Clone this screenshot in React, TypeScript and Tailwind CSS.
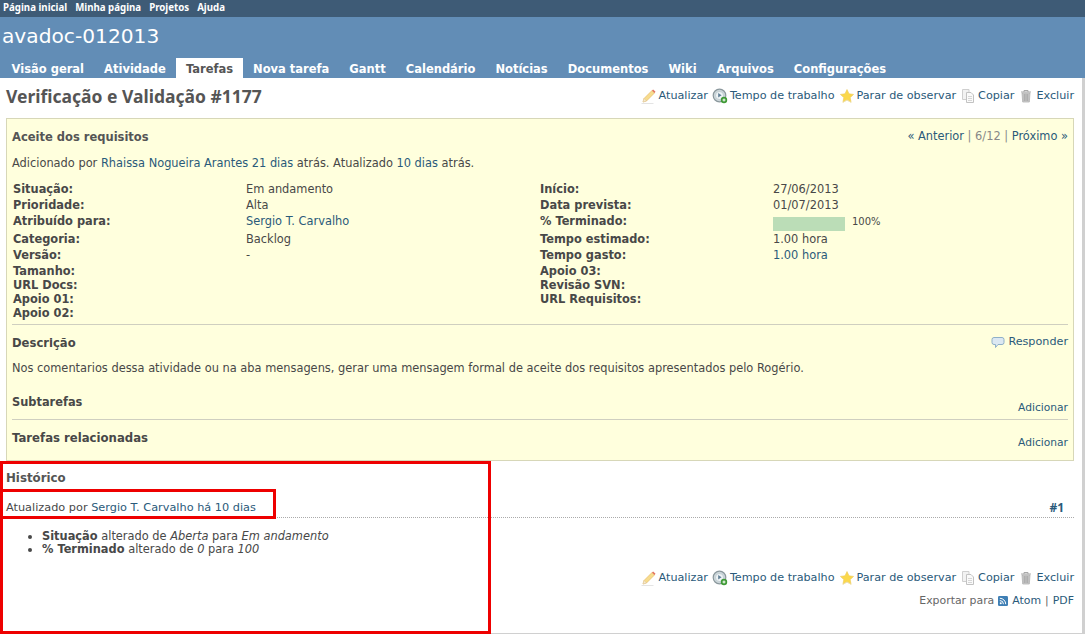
const font = { fontFamily: '"DejaVu Sans", Verdana, sans-serif' };
const narrow = { fontFamily: '"Noto Sans", "DejaVu Sans", sans-serif' };

function Pencil() {
  return (
    <svg width="16" height="16" viewBox="0 0 16 16" className="shrink-0">
      <path d="M2 14l1-3.500 8-8 2.500 2.500-8 8z" fill="#f7dc8e" stroke="#e3b45c" strokeWidth="0.6" />
      <path d="M11 2.500l2.500 2.500 1-1.200-2.400-2.400z" fill="#e2705c" />
      <path d="M2 14l1-3.500 2.500 2.500z" fill="#f6ead0" stroke="#d8c39a" strokeWidth="0.4" />
      <path d="M0.500 15.500h12" stroke="#e4e4e4" strokeWidth="1" />
    </svg>
  );
}

function Clock() {
  return (
    <svg width="16" height="16" viewBox="0 0 16 16" className="shrink-0">
      <circle cx="7.500" cy="7.500" r="6.300" fill="#ccd6da" stroke="#8a979c" strokeWidth="1.200" />
      <circle cx="7.500" cy="7.500" r="4" fill="#eef3f5" stroke="#a9b8be" strokeWidth="0.500" />
      <path d="M6.200 5v4.500l3.400-2.200z" fill="#607f96" />
      <circle cx="12" cy="12" r="3.200" fill="#3f9a36" />
      <path d="M10.500 12h3M12 10.500v3" stroke="#fff" strokeWidth="1" />
    </svg>
  );
}

function Star() {
  return (
    <svg width="16" height="16" viewBox="0 0 16 16" className="shrink-0">
      <path d="M8 1.500l2 4.300 4.600.6-3.400 3.200.9 4.700L8 12l-4.100 2.300.9-4.700L1.400 6.400l4.600-.6z" fill="#fbd84b" stroke="#ecc95a" strokeWidth="0.600" />
      <path d="M3.900 14.300L8 12l4.100 2.300" stroke="#e8e2c8" strokeWidth="0.700" fill="none" />
    </svg>
  );
}

function CopyIcon() {
  return (
    <svg width="16" height="16" viewBox="0 0 16 16" className="shrink-0">
      <path d="M2.500 1.500h6.500v10h-6.500z" fill="#f2f2f2" stroke="#cfcfcf" />
      <path d="M6.500 4.500h4.500l2.500 2.500v7.500h-7z" fill="#fafafa" stroke="#c2c2c2" />
      <path d="M8 8.500h4M8 10.500h4M8 12.500h4" stroke="#d6d6d6" />
    </svg>
  );
}

function Trash() {
  return (
    <svg width="16" height="16" viewBox="0 0 16 16" className="shrink-0">
      <path d="M3 4h10M6 4V2.500h4V4" stroke="#a8a8a8" fill="none" />
      <path d="M4 5h8l-.7 9H4.700z" fill="#cfcfcf" stroke="#a8a8a8" strokeWidth="0.700" />
      <path d="M6.200 6v7M8 6v7M9.800 6v7" stroke="#949494" strokeWidth="0.800" />
    </svg>
  );
}

function Comment() {
  return (
    <svg width="14" height="14" viewBox="0 0 14 14" className="shrink-0">
      <path d="M3 1.500h8a2 2 0 0 1 2 2v3a2 2 0 0 1-2 2H7l-2.500 3v-3H3a2 2 0 0 1-2-2v-3a2 2 0 0 1 2-2z" fill="#dce8f2" stroke="#8fb0c8" />
    </svg>
  );
}

function Feed() {
  return (
    <svg width="10" height="10" viewBox="0 0 11 11" className="shrink-0">
      <rect width="11" height="11" rx="1.500" fill="#3f7fb5" />
      <circle cx="3" cy="8" r="1.100" fill="#fff" />
      <path d="M2 5a4 4 0 0 1 4 4M2 2.500A6.500 6.500 0 0 1 8.500 9" stroke="#fff" strokeWidth="1.100" fill="none" />
    </svg>
  );
}

function ActionBar() {
  const items = [
    { icon: <Pencil />, label: "Atualizar" },
    { icon: <Clock />, label: "Tempo de trabalho" },
    { icon: <Star />, label: "Parar de observar" },
    { icon: <CopyIcon />, label: "Copiar" },
    { icon: <Trash />, label: "Excluir" },
  ];
  return (
    <div className="flex items-center gap-[4px] text-[11.200px] text-[#2a5a7a]">
      {items.map((i) => (
        <span key={i.label} className="flex items-center gap-[2px]">
          {i.icon}
          {i.label}
        </span>
      ))}
    </div>
  );
}

type Row = { h: string; a: string; b: React.ReactNode; c: string; d: React.ReactNode };

const rows: Row[] = [
  { h: "h-4", a: "Situação:", b: "Em andamento", c: "Início:", d: "27/06/2013" },
  { h: "h-4", a: "Prioridade:", b: "Alta", c: "Data prevista:", d: "01/07/2013" },
  {
    h: "h-4 mb-[2px]",
    a: "Atribuído para:",
    b: <span className="text-[#2a5a7a]">Sergio T. Carvalho</span>,
    c: "% Terminado:",
    d: (
      <span className="flex items-center gap-[7px]">
        <span className="h-[14px] w-[72px] translate-y-[2px] bg-[#bbddb7]" />
        <span className="text-[10px]">100%</span>
      </span>
    ),
  },
  { h: "h-4", a: "Categoria:", b: "Backlog", c: "Tempo estimado:", d: "1.00 hora" },
  { h: "h-4", a: "Versão:", b: "-", c: "Tempo gasto:", d: <span className="text-[#2a5a7a]">1.00 hora</span> },
  { h: "h-[14px]", a: "Tamanho:", b: "", c: "Apoio 03:", d: "" },
  { h: "h-[14px]", a: "URL Docs:", b: "", c: "Revisão SVN:", d: "" },
  { h: "h-[14px]", a: "Apoio 01:", b: "", c: "URL Requisitos:", d: "" },
  { h: "h-[14px]", a: "Apoio 02:", b: "", c: "", d: "" },
];

const tabs = ["Visão geral", "Atividade", "Tarefas", "Nova tarefa", "Gantt", "Calendário", "Notícias", "Documentos", "Wiki", "Arquivos", "Configurações"];

export default function App() {
  return (
    <div style={font} className="relative flex h-[634px] w-[1085px] flex-col overflow-hidden bg-white text-[11.400px] text-[#484848]">
      <div style={narrow} className="flex h-[17px] items-center gap-2 bg-[#3e5b76] pl-[3px] text-[9.700px] font-bold text-white">
        <span>Página inicial</span>
        <span>Minha página</span>
        <span>Projetos</span>
        <span>Ajuda</span>
      </div>
      <div className="flex h-[61px] flex-col justify-between bg-[#628db6]">
        <div className="pl-[2px] pt-[4px] text-[20.200px] leading-[30px] text-white">avadoc-012013</div>
        <div className="flex h-5 pl-[1.500px] text-[11.500px] font-bold text-white">
          {tabs.map((t) => (
            <span key={t} className={`flex items-center px-[10px] pt-[3px] ${t === "Tarefas" ? "bg-white text-[#555]" : ""}`}>
              {t}
            </span>
          ))}
        </div>
      </div>

      <div className="flex flex-1 flex-col border-b-[1px] border-r-[3px] border-[#d0d0d0] pl-[6px] pr-[8px]">
        <div className="flex h-[40px] items-center justify-between">
          <h2 style={narrow} className="pb-[3px] text-[17.500px] font-bold leading-none text-[#555]">Verificação e Validação #1177</h2>
          <div className="pb-[4px]">
            <ActionBar />
          </div>
        </div>

        <div className="h-[343px] border border-[#d7d7b8] bg-[#ffffdd] pl-[5px] pr-[5px]">
          <div className="flex items-center justify-between pt-[9px]">
            <h3 className="text-[11.500px] font-bold leading-[16px] text-[#555]">Aceite dos requisitos</h3>
            <span className="pb-[1px] text-[11.400px] text-[#2a5a7a]">
              « Anterior <span className="text-[#888]">| 6/12 |</span> Próximo »
            </span>
          </div>
          <p className="pt-[9px] leading-[16px]">
            Adicionado por <span className="text-[#2a5a7a]">Rhaissa Nogueira Arantes</span>{" "}
            <span className="text-[#2a5a7a]">21 dias</span> atrás. Atualizado{" "}
            <span className="text-[#2a5a7a]">10 dias</span> atrás.
          </p>
          <div className="pt-[10px]">
            {rows.map((r) => (
              <div key={r.a} className={`grid grid-cols-[233px_294px_233px_1fr] items-center pl-[1px] ${r.h}`}>
                <span className="font-bold">{r.a}</span>
                <span>{r.b}</span>
                <span className="font-bold">{r.c}</span>
                <span>{r.d}</span>
              </div>
            ))}
          </div>
          <div className="mt-[5px] border-t border-[#cfcfc0] pt-[9px]">
            <div className="flex items-center justify-between">
              <span className="text-[11.600px] font-bold leading-[16px]">Descrição</span>
              <span className="flex items-center gap-[3px] text-[11.200px] text-[#2a5a7a]">
                <Comment />
                Responder
              </span>
            </div>
            <p className="pt-[9px] leading-[16px]">
              Nos comentarios dessa atividade ou na aba mensagens, gerar uma mensagem formal de aceite dos requisitos apresentados pelo Rogério.
            </p>
          </div>
          <div className="flex h-[43px] justify-between pt-[18px]">
            <span className="text-[11.400px] font-bold leading-[16px]">Subtarefas</span>
            <span className="pt-[6px] text-[10.700px] text-[#2a5a7a]">Adicionar</span>
          </div>
          <div className="flex h-[36px] justify-between border-t border-[#cfcfc0] pt-[10px]">
            <span className="text-[11.700px] font-bold leading-[16px]">Tarefas relacionadas</span>
            <span className="pt-[5px] text-[10.700px] text-[#2a5a7a]">Adicionar</span>
          </div>
        </div>

        <h3 className="pt-[9px] text-[11.800px] font-bold leading-[16px] text-[#555]">Histórico</h3>
        <div className="mt-[13px] flex items-center justify-between border-b border-dotted border-[#aaa]">
          <span className="text-[11.300px] leading-[16px]">
            Atualizado por <span className="text-[#2a5a7a]">Sergio T. Carvalho</span>{" "}
            <span className="text-[#2a5a7a]">há 10 dias</span>
          </span>
          <span style={narrow} className="pr-[10px] text-[12px] font-bold text-[#2a5a7a]">#1</span>
        </div>
        <ul className="list-disc pl-[36px] pt-[12px] leading-[13px]">
          <li>
            <b>Situação</b> alterado de <i>Aberta</i> para <i>Em andamento</i>
          </li>
          <li>
            <b>% Terminado</b> alterado de <i>0</i> para <i>100</i>
          </li>
        </ul>
        <div className="flex justify-end pt-[14px]">
          <ActionBar />
        </div>
        <div className="flex items-center justify-end gap-[4px] pt-[6px] text-[10.900px] text-[#666]">
          Exportar para <Feed /> <span className="text-[#2a5a7a]">Atom</span> | <span className="text-[#2a5a7a]">PDF</span>
        </div>
      </div>

      <div className="absolute left-0 top-[461px] h-[173px] w-[491px] border-[3px] border-[#ee0000]" />
      <div className="absolute left-0 top-[489px] h-[30px] w-[276px] border-[3px] border-[#ee0000]" />
    </div>
  );
}
